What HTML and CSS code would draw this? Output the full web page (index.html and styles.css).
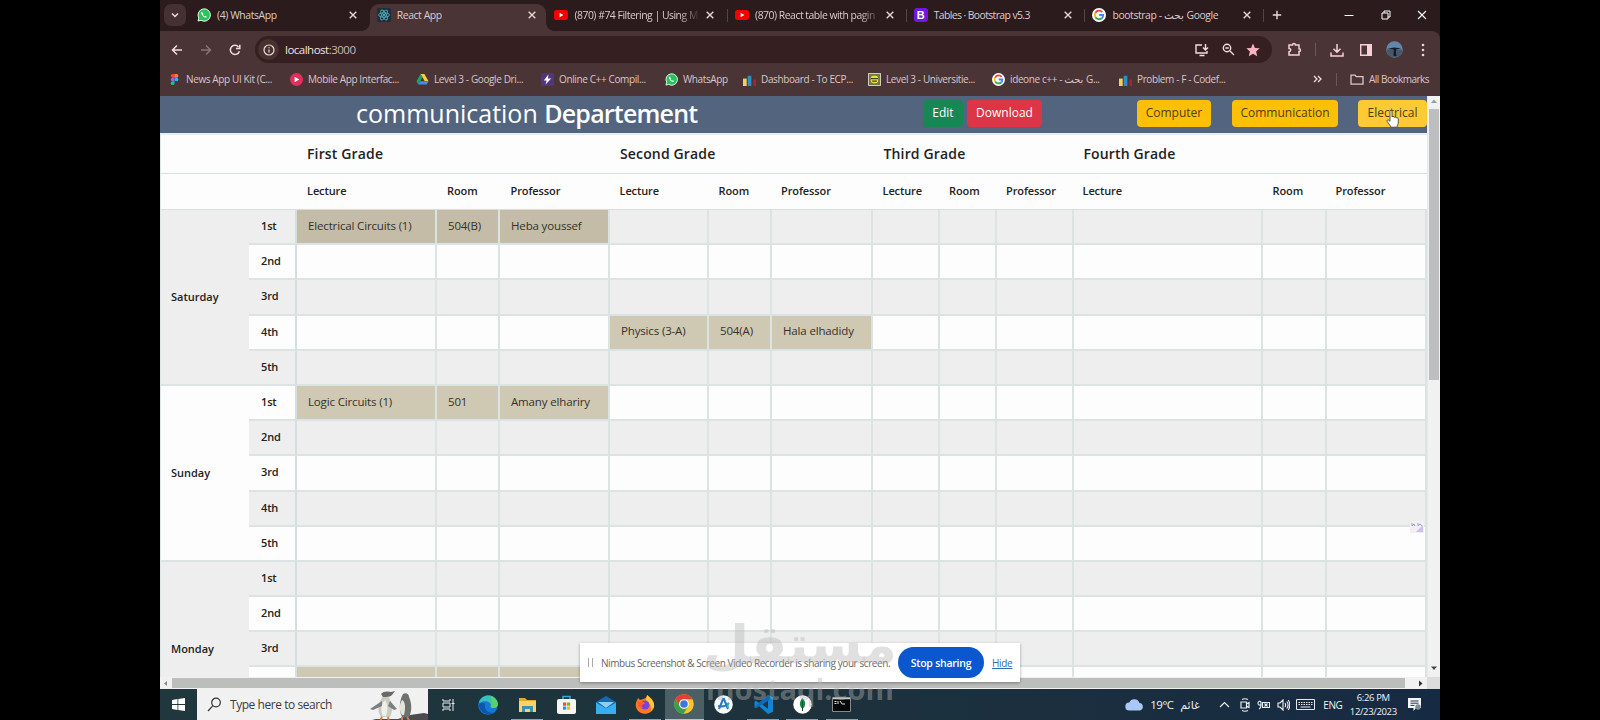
FILE: index.html
```html
<!DOCTYPE html>
<html lang="en">
<head>
<meta charset="utf-8">
<title>React App</title>
<link rel="stylesheet" href="styles.css">
</head>
<body>
<svg class="defs" width="0" height="0">
  <symbol id="x" viewBox="0 0 10 10"><path d="M1.700 1.700l6.600 6.600M8.300 1.700l-6.600 6.600" stroke="#e5d5d5" stroke-width="1.400" fill="none"/></symbol>
  <symbol id="wa" viewBox="0 0 14 14"><path d="M1 13l.8-3A6.2 6.2 0 1 1 4 12.300z" fill="#25c55b" stroke="#e9f8ee" stroke-width="1"/><path d="M4.800 3.800c-1 1-.6 2.500 1 4.200s3.300 2 4.200 1l-1.500-1.300-1 .6c-.8-.4-1.200-.9-1.500-1.600l.6-.9z" fill="#fff"/></symbol>
  <symbol id="yt" viewBox="0 0 14 14"><rect y="2" width="14" height="10" rx="2.500" fill="#f50000"/><path d="M5.600 4.800v4.400l3.800-2.200z" fill="#fff"/></symbol>
  <symbol id="gg" viewBox="0 0 14 14"><circle cx="7" cy="7" r="7" fill="#fff"/><g fill="none" stroke-width="1.900"><path d="M10.300 4.100A4.200 4.200 0 0 0 3.400 4.900" stroke="#ea4335"/><path d="M3.400 4.900a4.200 4.200 0 0 0 0 4.200" stroke="#fbbc05"/><path d="M3.400 9.100a4.200 4.200 0 0 0 6.400 1.100" stroke="#34a853"/><path d="M9.800 10.200A4.200 4.200 0 0 0 11.200 7H7.200" stroke="#4285f4"/></g></symbol>
  <symbol id="bars" viewBox="0 0 14 14"><path d="M0 6h4v8H0z" fill="#f3cf5f"/><path d="M5 3h4v11H5z" fill="#2c8fc9"/><path d="M11 7h3v7h-3z" fill="#a92331"/></symbol>
</svg>
<div class="screen">
  <div class="tabstrip">
    <div class="tabsearch"><svg width="10" height="10" viewBox="0 0 10 10"><path d="M2 3.500l3 3 3-3" stroke="#ecdcdc" stroke-width="1.500" fill="none"/></svg></div>
    <div class="tab"><svg class="ico"><use href="#wa"/></svg><span>(4) WhatsApp</span><svg class="close"><use href="#x"/></svg></div>
    <div class="tab active"><svg class="ico" viewBox="0 0 14 14"><rect width="14" height="14" rx="1.500" fill="#1d2f38"/><g fill="none" stroke="#4fa9b8" stroke-width=".9"><ellipse cx="7" cy="7" rx="5.500" ry="2.200"/><ellipse cx="7" cy="7" rx="5.500" ry="2.200" transform="rotate(60 7 7)"/><ellipse cx="7" cy="7" rx="5.500" ry="2.200" transform="rotate(120 7 7)"/></g><circle cx="7" cy="7" r="1.200" fill="#4fa9b8"/></svg><span>React App</span><svg class="close"><use href="#x"/></svg></div>
    <div class="tab"><svg class="ico"><use href="#yt"/></svg><span class="fade">(870) #74 Filtering | Using M</span><svg class="close"><use href="#x"/></svg></div>
    <div class="tab sep"><svg class="ico"><use href="#yt"/></svg><span class="fade">(870) React table with pagin</span><svg class="close"><use href="#x"/></svg></div>
    <div class="tab sep"><i class="ico boot">B</i><span class="tight">Tables · Bootstrap v5.3</span><svg class="close"><use href="#x"/></svg></div>
    <div class="tab sep"><svg class="ico"><use href="#gg"/></svg><span>bootstrap - بحث Google</span><svg class="close"><use href="#x"/></svg></div>
    <div class="newtab sep"><svg width="10" height="10" viewBox="0 0 10 10"><path d="M5 .8v8.400M.8 5h8.400" stroke="#eadada" stroke-width="1.400"/></svg></div>
    <div class="wincontrols">
      <svg width="10" height="10" viewBox="0 0 10 10"><path d="M.5 5.500h9" stroke="#fff"/></svg>
      <svg width="10" height="10" viewBox="0 0 10 10" fill="none" stroke="#fff"><path d="M1 3h6v6H1zM3 3V1h6v6H7"/></svg>
      <svg width="10" height="10" viewBox="0 0 10 10"><path d="M1 1l8 8M9 1l-8 8" stroke="#fff" stroke-width="1.100"/></svg>
    </div>
  </div>

  <div class="toolbar">
    <svg class="nav" viewBox="0 0 12 12"><path d="M11 6H1.500M6 1.500L1.500 6 6 10.500"/></svg>
    <svg class="nav dim" viewBox="0 0 12 12"><path d="M1 6h9.500M6 1.500L10.500 6 6 10.500"/></svg>
    <svg class="nav" viewBox="0 0 12 12"><path d="M10.400 7.200A4.600 4.600 0 1 1 9.500 2.900M10.800.8v3.700H7"/></svg>
    <div class="omnibox">
      <div class="info"><svg width="12" height="12" viewBox="0 0 12 12" fill="none" stroke="#efdcdc" stroke-width="1.200"><circle cx="6" cy="6" r="5"/><path d="M6 5.400v3.200M6 3.200v1.100"/></svg></div>
      <span class="url"><b>localhost</b>:3000</span>
      <svg class="o1" width="14" height="14" viewBox="0 0 14 14" fill="none" stroke="#f0dede" stroke-width="1.400"><path d="M7 2H1v8h11V8M4.500 12.500h5M10.500 1v5.500M8 4.500L10.500 7 13 4.500"/></svg>
      <svg class="o2" width="13" height="13" viewBox="0 0 13 13" fill="none" stroke="#f0dede" stroke-width="1.400"><circle cx="5" cy="5" r="3.700"/><path d="M3.300 5h3.400M8 8l4 4"/></svg>
      <svg class="o3" width="14" height="14" viewBox="0 0 14 14"><path d="M7 .5l1.900 4.400 4.800.4-3.600 3.200 1.100 4.700L7 10.700l-4.200 2.500 1.100-4.700L.3 5.300l4.800-.4z" fill="#ffb1c1"/></svg>
    </div>
    <svg class="puzzle" width="15" height="15" viewBox="0 0 15 15" fill="none" stroke="#f7cfd5" stroke-width="1.500"><path d="M2 3h3.500a1.400 1.400 0 0 1 2.900 0H12v3.700a1.400 1.400 0 0 1 0 2.900V13H2V9.800a1.600 1.600 0 0 0 0-3.400z"/></svg>
    <i class="vsep"></i>
    <svg class="dl" width="14" height="14" viewBox="0 0 14 14" fill="none" stroke="#f7cfd5" stroke-width="1.500"><path d="M7 1v8M3.500 5.700L7 9.200l3.500-3.500M1 9.500V13h12V9.500"/></svg>
    <svg class="panel" width="12" height="12" viewBox="0 0 12 12"><path d="M.7.7h10.600v10.600H.7z" fill="none" stroke="#f7cfd5" stroke-width="1.400"/><path d="M7 1h4.500v10H7z" fill="#f7cfd5"/></svg>
    <svg class="avatar" width="17" height="17" viewBox="0 0 17 17"><circle cx="8.500" cy="8.500" r="8.300" fill="#6287aa"/><path d="M.5 8.500h16a8 8 0 0 1-16 0z" fill="#46596c"/><path d="M1 8l7-1.500 7 .7-5 1.300v3.500l.5 3H7.500l.3-6.500z" fill="#151a24"/></svg>
    <svg class="dots" width="4" height="14" viewBox="0 0 4 14" fill="#f7cfd5"><circle cx="2" cy="2" r="1.300"/><circle cx="2" cy="7" r="1.300"/><circle cx="2" cy="12" r="1.300"/></svg>
  </div>

  <div class="bookmarks">
    <div class="bm w1"><svg class="ico" viewBox="0 0 14 14"><path d="M5 1h2v4H5a2 2 0 0 1 0-4z" fill="#f24e1e"/><path d="M7 1h2.200a2 2 0 0 1 0 4H7z" fill="#ff7262"/><path d="M5 5h2v4H5a2 2 0 0 1 0-4z" fill="#a259ff"/><circle cx="9.100" cy="7" r="2" fill="#1abcfe"/><path d="M5 9h2v2a2 2 0 1 1-2-2z" fill="#0acf83"/></svg><span>News App UI Kit (C...</span></div>
    <div class="bm w2"><svg class="ico" viewBox="0 0 14 14"><circle cx="7" cy="7" r="7" fill="#e0315c"/><path d="M5 4v6l5-3z" fill="#fff"/></svg><span>Mobile App Interfac...</span></div>
    <div class="bm w3"><svg class="ico" viewBox="0 0 14 14"><path d="M5 1h4l4.500 8h-4z" fill="#ffcf3f"/><path d="M5 1L.5 9l2 3.500L7 4.500z" fill="#11a861"/><path d="M4.500 9h9l-2 3.500h-9z" fill="#4688f4"/></svg><span>Level 3 - Google Dri...</span></div>
    <div class="bm w4"><svg class="ico" viewBox="0 0 14 14"><rect width="14" height="14" rx="2" fill="#51367f"/><path d="M8 1.500L3 8h3l-1 4.500L11 6H7.500z" fill="#fff"/></svg><span>Online C++ Compil...</span></div>
    <div class="bm w5"><svg class="ico"><use href="#wa"/></svg><span>WhatsApp</span></div>
    <div class="bm w6"><svg class="ico"><use href="#bars"/></svg><span>Dashboard - To ECP...</span></div>
    <div class="bm w7"><svg class="ico" viewBox="0 0 14 14"><path d="M.5.5h13v13H.5z" fill="#6f7a4c" stroke="#dcdcc8"/><rect x="3" y="3" width="8" height="8" rx="3" fill="#f0e130"/><path d="M3 6h8M4.500 8.800h5" stroke="#3b4214" stroke-width="1.300"/></svg><span>Level 3 - Universitie...</span></div>
    <div class="bm w8"><svg class="ico"><use href="#gg"/></svg><span>ideone c++ - بحث G...</span></div>
    <div class="bm w9"><svg class="ico"><use href="#bars"/></svg><span>Problem - F - Codef...</span></div>
    <div class="bmright">
      <svg width="9" height="8" viewBox="0 0 9 8" fill="none" stroke="#efdcdc" stroke-width="1.300"><path d="M1 1l3 3-3 3M5 1l3 3-3 3"/></svg>
      <i class="vsep"></i>
      <svg width="14" height="11" viewBox="0 0 14 11" fill="none" stroke="#dcc6c8" stroke-width="1.300"><path d="M1 1.200h4l1.400 1.500H13v7.500H1z"/></svg>
      <span>All Bookmarks</span>
    </div>
  </div>

  <div class="viewport">
    <div class="page">
      <header class="pagehead">
        <h1>communication <b>Departement</b></h1>
        <button class="btn edit">Edit</button>
        <button class="btn download">Download</button>
        <button class="btn dept computer">Computer</button>
        <button class="btn dept communication">Communication</button>
        <button class="btn dept electrical">Electrical</button>
      </header>
      <div class="schedule">
        <div class="grades"><span>First Grade</span><span>Second Grade</span><span>Third Grade</span><span>Fourth Grade</span></div>
        <div class="heads" id="heads"></div>
        <div class="grid" id="grid"></div>
      </div>
      <svg class="widget" width="14" height="14" viewBox="0 0 14 14"><path d="M0 1h14v12H0z" fill="#f1eef6"/><path d="M6 12l7-7v7z" fill="#cdbdec"/><path d="M2 3v3l2-2 1 2M8 3v3l2-2 2 2" fill="none" stroke="#a5a2af"/></svg>
    </div>
    <div class="vscroll"><svg width="12" height="12" viewBox="0 0 12 12"><path d="M3 8l3-3.500L9 8z" fill="#9a9aa8"/></svg><i></i><svg width="12" height="12" viewBox="0 0 12 12"><path d="M3 4.500h6L6 8z" fill="#444"/></svg></div>
    <div class="hscroll"><svg width="12" height="11" viewBox="0 0 12 11"><path d="M7 3L4 5.500 7 8z" fill="#888"/></svg><i></i><svg width="19" height="11" viewBox="0 0 19 11"><path d="M14 2.500l3.500 3-3.500 3z" fill="#333"/></svg></div>
  </div>

  <div class="taskbar">
    <div class="start"><svg width="13" height="13" viewBox="0 0 13 13" fill="#fff"><path d="M0 1.900l5.500-.8v5H0zM6.300 1L13 0v6.100H6.300zM0 6.900h5.500v5L0 11.100zM6.300 6.900H13V13l-6.700-1z"/></svg></div>
    <div class="search">
      <svg width="15" height="15" viewBox="0 0 15 15" fill="none" stroke="#333" stroke-width="1.200"><circle cx="9" cy="5.500" r="4.300"/><path d="M6 8.700L1 14"/></svg>
      <span>Type here to search</span>
      <svg class="penguins" width="60" height="30" viewBox="0 0 60 30"><path d="M0 30l8-2 22 0 12-4 14-2 4 1v7z" fill="#4b4b50"/><path d="M16 2c3-2 6 0 6 3l-1 2c4 5 4 13 1 19h-9c-4-6-3-14 1-19z" fill="#c9cbc0"/><path d="M17 9c3 4 3 11 1 16h-3c-3-5-2-12 2-16z" fill="#efefe6"/><path d="M14 10L2 18l3 1 9-4M22 10l7 8-3 1-6-4" fill="#79807f"/><path d="M13 3c2-3 7-3 10-2l4-1-3 4c-2 2-7 2-9 2z" fill="#666b69"/><path d="M35 3c3-2 6 0 6 3 3 7 3 14 0 20h-7c-3-6-3-16 1-23z" fill="#6d726e"/><path d="M34 9c3 1 4 7 2 15h-2c-3-5-3-10 0-15z" fill="#e6e5d9"/><path d="M14 26l-2 4M20 26l1 4M34 26v3M39 26l2 3" stroke="#e07838" stroke-width="2"/></svg>
    </div>
    <div class="apps">
      <div><svg width="14" height="14" viewBox="0 0 14 14" fill="none" stroke="#e8edef"><path d="M1 1v2h7V1M1 13v-2h7v2M1 5h7v4H1zM11 1v12M9.500 5.500h3"/></svg></div>
      <div><svg width="20" height="20" viewBox="0 0 20 20"><circle cx="10" cy="10" r="9.800" fill="#1479d0"/><path d="M1 8C3-2 18-2 19.800 8c.6 5-5 6-7.300 4 2-5-5-8-11.500-4z" fill="#37c2b5"/><path d="M13 1c5 2 7 6 6.800 8.500-.4 4-5 4-7.300 2.500 2-4 1-7 .5-11z" fill="#5cd06a"/><path d="M7 10c-1 5 4 9 9 7.500C9 22 1 17 1 10c2-3 6-3 6 0z" fill="#0d55ad"/></svg></div>
      <div class="run"><svg width="19" height="17" viewBox="0 0 19 17"><path d="M1 2h6l2 2h9v12H1z" fill="#e6a92e"/><path d="M1 5h17v11H1z" fill="#fcd462"/><path d="M4 16v-6h11v6h-3v-3H7v3z" fill="#3e8fbd"/></svg></div>
      <div><svg width="19" height="20" viewBox="0 0 19 20"><path d="M6 5V1.500h7V5" fill="none" stroke="#39a5dc" stroke-width="1.500"/><rect y="4" width="19" height="15" rx="2" fill="#f5f5f5"/><path d="M6 7.500h3.200v3.200H6z" fill="#f25022"/><path d="M10 7.500h3.200v3.200H10z" fill="#7fba00"/><path d="M6 11.500h3.200v3.200H6z" fill="#00a4ef"/><path d="M10 11.500h3.200v3.200H10z" fill="#ffb900"/></svg></div>
      <div><svg width="20" height="18" viewBox="0 0 20 18"><path d="M0 6l10-6 10 6v12H0z" fill="#1269b8"/><path d="M2 6h16L10 12z" fill="#8fcdf3"/><path d="M0 6.500l10 6 10-6V18H0z" fill="#36aef0"/></svg></div>
      <div class="run"><svg width="20" height="19" viewBox="0 0 20 19"><path d="M3 3l2 2c4-1 7-2 7-5 4 3 8 7 7 12-2 9-16 9-18 0C0 8 2 6 3 3z" fill="#ff7925"/><path d="M12 0c4 3 8 7 7 12l-3 4c1-6-2-8-5-10z" fill="#ffc83b"/><circle cx="10" cy="10" r="4.500" fill="#7b45cf"/><path d="M3 7c4-1 7 0 7 2-3 0-4 2-2 4-4 0-6-3-5-6z" fill="#ff5b2d"/></svg></div>
      <div class="run front"><svg width="20" height="20" viewBox="0 0 20 20"><circle cx="10" cy="10" r="9.800" fill="#f7c52c"/><path d="M1.500 5.100A9.800 9.800 0 0 1 18.500 5.200H10A4.900 4.900 0 0 0 5.700 12.400z" fill="#e34033"/><path d="M1.500 5.100A9.800 9.800 0 0 0 9.500 19.800L14.200 12.400A4.900 4.900 0 0 1 5.700 12.400z" fill="#31a350"/><circle cx="10" cy="10" r="4.800" fill="#fff"/><circle cx="10" cy="10" r="3.800" fill="#3978e5"/></svg></div>
      <div><svg width="19" height="19" viewBox="0 0 19 19"><circle cx="9.500" cy="9.500" r="9.300" fill="#f4fafb"/><path d="M9.500 3L5 14M9.500 3L14 14M4 11c4 1 8 0 11-3" fill="none" stroke="#2979c2" stroke-width="2"/><path d="M14 8v5" stroke="#3bbf7a" stroke-width="1.500"/></svg></div>
      <div class="run"><svg width="19" height="19" viewBox="0 0 19 19"><path d="M14 0l5 2.300v14.400L14 19 5 10.900 2 13.200.5 12.300v-5.500L2 5.800l3 2.300z" fill="#1583cf"/><path d="M14 5.200v8.600L8.300 9.500z" fill="#1f3542"/><path d="M.5 12.300L14 0l1.500.7V5L2 13.200z" fill="#0d6cb3"/></svg></div>
      <div class="run"><svg width="19" height="19" viewBox="0 0 19 19"><circle cx="9.500" cy="9.500" r="9.200" fill="#fff"/><path d="M9.500 3c4 4 3 9 0 11-3-2-4-7 0-11z" fill="#13884c"/><path d="M9.500 6v10" stroke="#0a5631"/></svg></div>
      <div class="run"><svg width="19" height="15" viewBox="0 0 19 15"><path d="M.5.500h18v14H.5z" fill="#080808" stroke="#858b8d"/><path d="M1 1.500h17" stroke="#c8c8c8" stroke-width="1.500"/><path d="M2.500 4.500h2M2.500 6.500h2M6 4v3M8 4l2 3h3" stroke="#ddd" fill="none"/></svg></div>
    </div>
    <div class="tray">
      <svg class="cloud" width="19" height="13" viewBox="0 0 19 13"><path d="M4.500 12.500a4 4 0 0 1-.3-8A5.500 5.500 0 0 1 14.500 5a3.800 3.800 0 0 1 .3 7.500z" fill="#a9c8f5"/></svg>
      <span class="temp">19°C</span><span class="cond">غائم</span>
      <svg class="t1" width="11" height="7" viewBox="0 0 11 7"><path d="M1 6l4.500-4.500L10 6" fill="none" stroke="#f0f3f6" stroke-width="1.200"/></svg>
      <svg class="t2" width="10" height="14" viewBox="0 0 10 14" fill="none" stroke="#e8edf2" stroke-width="1.200"><path d="M2 1.500c2-1 4-1 6 0M2 12.500c2 1 4 1 6 0M1 4h5.500v6H1zM6.500 6L9 4.500v5L6.500 8"/></svg>
      <svg class="t3" width="13" height="10" viewBox="0 0 13 10" fill="none" stroke="#e8edf2" stroke-width="1.100"><path d="M4 4.500C2 6 1 4.500 1 3s3-3 3 0v2.500C4 7 3 8.500 2 9M5.500 2.500h7v5h-7zM7.500 3.500l3 3M10.500 3.500l-3 3"/></svg>
      <svg class="t4" width="13" height="12" viewBox="0 0 13 12" fill="none" stroke="#f0f3f6" stroke-width="1.100"><path d="M1 4h2l3-3v10L3 8H1zM8 4c.8 1.200.8 2.800 0 4M9.800 2.500c1.500 2 1.500 5 0 7M11.300 1c1.800 3 1.800 7 0 10"/></svg>
      <svg class="t5" width="19" height="11" viewBox="0 0 19 11" fill="none" stroke="#e3e9ee"><path d="M.5.500h18v10H.5z"/><path d="M2.500 3.500h14M2.500 5.500h14" stroke-dasharray="1.500 1"/><path d="M4.500 8h10"/></svg>
      <span class="eng">ENG</span>
      <div class="clock"><span>6:26 PM</span><span>12/23/2023</span></div>
      <svg class="note" width="13" height="13" viewBox="0 0 13 13"><path d="M0 0h13v10H8l-2.500 3v-3H0z" fill="#f5f6f7"/><path d="M2.500 3h8M2.500 5.200h8M2.500 7.400h4" stroke="#26374a"/><circle cx="10" cy="9" r="2.700" fill="#7f8c98"/></svg>
    </div>
  </div>

  <div class="sharebar">
    <i class="grip"></i><span>Nimbus Screenshot &amp; Screen Video Recorder is sharing your screen.</span>
    <button>Stop sharing</button><a>Hide</a>
  </div>
  <div class="mark"><div class="mark-ar" lang="ar">مستقل</div><div class="mark-en">mostaql.com</div></div>
  <svg class="cursor" width="14" height="18" viewBox="0 0 14 18"><path d="M4 1.500c0-1.300 2-1.300 2 0V7c.6-.8 2-.6 2.200.3.700-.6 1.900-.3 2 .6.900-.5 2.100 0 2.100 1.100v4.200l-1.500 4H5.200L1.200 11.500c-.8-1 .4-2.200 1.500-1.300L4 11.300z" fill="#fff" stroke="#333" stroke-width=".8"/></svg>
</div>
<script src="schedule.js"></script>
</body>
</html>
```
FILE: styles.css
```css
* { box-sizing: border-box; }
body { margin: 0; background: #000; font-family: "Open Sans", "DejaVu Sans", sans-serif; overflow: hidden; }
svg { display: block; flex: none; }
.defs { position: absolute; }
.screen { position: relative; width: 1280px; height: 720px; margin: 0 auto; overflow: hidden; display: flex; flex-direction: column; background: #2c1b1c; }
.ico { width: 14px; height: 14px; flex: none; }

.tabstrip { height: 31px; flex: none; background: #2c1b1c; display: flex; color: #dccbcb; font-size: 10.400px; }
.tabsearch { width: 22px; height: 22px; margin: 4px 5px 0 4px; border-radius: 7px; background: #453033; display: flex; align-items: center; justify-content: center; }
.tab { width: 178.7px; height: 31px; display: flex; align-items: center; padding: 0 12px 1px 6px; position: relative; }
.tab span { flex: 1; margin: 0 0 0 6px; white-space: nowrap; letter-spacing: -.4px; }
.tab .fade { letter-spacing: -.48px; -webkit-mask-image: linear-gradient(90deg, #000 105px, transparent 127px); }
.tab .tight { letter-spacing: -.6px; }
.tab.sep { padding-left: 8px; padding-right: 11px; }
.close { width: 10px; height: 10px; }
.active { background: #4b3436; border-radius: 9px 9px 0 0; margin-top: 4px; height: 27px; padding: 0 9px 5px 7px; width: 176px; margin-right: 2.700px; }
.active::before, .active::after { content: ""; position: absolute; bottom: 0; width: 8px; height: 8px; }
.active::before { left: -8px; background: radial-gradient(circle at 0 0, transparent 7.500px, #4b3436 8px); }
.active::after { right: -8px; background: radial-gradient(circle at 100% 0, transparent 7.500px, #4b3436 8px); }
.sep { background: linear-gradient(#5a4143, #5a4143) 0 9px / 1px 13px no-repeat; }
.boot { background: #7118e0; border-radius: 3px; color: #fff; font: bold 11px/14px "Liberation Sans", sans-serif; text-align: center; }
.newtab { width: 24px; padding: 10px 0 0 9px; }
.wincontrols { display: flex; gap: 26.500px; padding: 10px 0 0 57px; }

.toolbar { height: 33px; flex: none; background: #4b3436; display: flex; align-items: center; padding: 4px 0 0 11px; border-radius: 0 8px 0 0; }
.nav { width: 12px; height: 12px; fill: none; stroke: #f0dcdd; stroke-width: 1.500; margin-right: 17px; }
.nav.dim { stroke: #8b7274; }
.nav:nth-child(3) { margin-right: 14px; }
.omnibox { width: 1017px; height: 27px; border-radius: 14px; background: #351f21; display: flex; align-items: center; padding-left: 3px; }
.info { width: 21px; height: 21px; border-radius: 50%; background: #49312f; display: flex; align-items: center; justify-content: center; }
.url { width: 904px; margin: -1px 0 0 6px; font-size: 11.500px; letter-spacing: -.5px; color: #cbb8b9; }
.url b { font-weight: 400; color: #f0e3e3; }
.o1 { margin-left: 6px; }
.o2 { margin-left: 13px; }
.o3 { margin-left: 11px; }
.puzzle { margin-left: 15px; }
.vsep { width: 1px; height: 13px; background: #715557; }
.toolbar .vsep { margin-left: 13px; }
.dl { margin-left: 14px; }
.panel { margin-left: 16px; }
.avatar { margin-left: 14px; }
.dots { margin-left: 18px; }

.bookmarks { height: 32px; flex: none; background: #4b3436; display: flex; align-items: center; padding: 0 0 2px 8px; color: #d9c6c7; font-size: 10px; letter-spacing: -.38px; white-space: nowrap; }
.bm { display: flex; align-items: center; gap: 5px; }
.bm .ico { width: 13px; height: 13px; }
.w1 { width: 122px; } .w2 { width: 126px; } .w3 { width: 125px; } .w4 { width: 124px; } .w5 { width: 78px; } .w6 { width: 125px; } .w7 { width: 124px; } .w8 { width: 127px; } .w9 { width: 194px; }
.bmright { display: flex; align-items: center; }
.bmright .vsep { margin: 0 13px 0 14px; }
.bmright span { margin-left: 5px; letter-spacing: -.5px; }

.viewport { height: 593px; flex: none; display: grid; grid-template: 581px 12px / 1267px 13px; background: #f0f0f0; }
.page { overflow: hidden; position: relative; background: #fdfdfd; }
.pagehead { height: 37px; background: #53647f; display: flex; align-items: center; padding: 0 0 2px 196px; color: #fff; }
.pagehead h1 { width: 571px; margin: -2px 0 0; font-weight: 400; font-size: 25px; line-height: 30px; white-space: nowrap; }
.pagehead h1 b { font-weight: 600; letter-spacing: -.8px; }
.btn { height: 27px; border: 0; border-radius: 4px; padding: 0 0 2px; font: 500 12px "Open Sans", sans-serif; flex: none; }
.edit { width: 40px; background: #198754; color: #fff; }
.download { width: 75px; margin-left: 4px; background: #dc3545; color: #fff; }
.dept { background: #fdc007; color: #4d3e15; }
.computer { width: 74px; margin-left: 95px; }
.communication { width: 106px; margin-left: 21px; }
.electrical { width: 69px; margin-left: 20px; background: #fbca34; }

.schedule { border-top: 2px solid #e0eff8; border-left: 1px solid #dde7ea; color: #222; }
.grades, .heads { display: grid; align-items: center; padding: 0 0 2px 146px; border-bottom: 1px solid #d5dfdd; font-weight: 600; }
.grades { height: 39px; grid-template-columns: 313px 263.500px 200px 1fr; font-size: 14px; letter-spacing: .15px; }
.heads { height: 36px; grid-template-columns: 140px 63.500px 109px 99px 62.500px 101.500px 66.500px 57px 76.500px 190px 63px 1fr; font-size: 11px; letter-spacing: -.1px; }
.grid { display: grid; grid-template-columns: 88px 48px 140px 63px 110px 99px 63px 101px 67px 56.500px 77.500px 189px 64px 100px; grid-auto-rows: 35.200px; }
.day, .period, .cell { border-bottom: 2px solid #dbe3e3; display: flex; align-items: center; white-space: nowrap; }
.day { grid-row: span 5; padding-left: 10px; font-weight: 600; font-size: 11px; }
.period { padding: 0 0 2px 12px; font-weight: 600; font-size: 11px; letter-spacing: -.15px; border-right: 2px solid #d5dfdf; }
.cell { border-right: 2px solid #dbe3e3; padding: 0 0 3px 11px; font-size: 11.500px; letter-spacing: -.15px; }
.odd { background: #eee; }
.even { background: #fdfdfd; }
.taken { background: #cfc8b2; color: #36322b; }
.taken.odd { background: #c4bca7; }
.widget { position: absolute; right: 3px; top: 424px; }
.vscroll { background: #f1f1f2; display: flex; flex-direction: column; border-left: 1px solid #e5e9e9; }
.vscroll i { height: 271px; flex: none; width: 10px; margin: 2px 0 283px 1px; background: #bdbebf; }
.vscroll svg { height: 12px; margin-top: -1px; }
.hscroll { grid-column: 1 / 3; background: linear-gradient(90deg, #f1f1f1 1267px, #dcdcdc 0); display: flex; align-items: center; }
.hscroll i { width: 1233px; height: 10px; background: #bcbebc; }

.taskbar { height: 31px; flex: none; display: flex; background: linear-gradient(90deg, #20373d, #1d323c 50%, #172a43); color: #eef2f4; }
.start { width: 37px; padding: 9px 0 0 12px; }
.search { width: 231px; background: #f1f1f1; display: flex; align-items: center; color: #3c3c3c; font-size: 12px; overflow: hidden; }
.search svg:first-child { margin: 0 8px 0 10px; }
.search span { width: 141px; white-space: nowrap; letter-spacing: -.45px; }
.penguins { margin-top: 2px; }
.apps { display: flex; padding-left: 1px; }
.apps > div { width: 39.300px; display: flex; align-items: center; justify-content: center; }
.run { background: linear-gradient(#7aa7c4, #7aa7c4) 50% 100% / 32px 1.500px no-repeat; }
.apps > .front { background: #4c5f65; border-bottom: 1px solid #a6c8dc; }
.tray { display: flex; align-items: center; margin-left: 264px; font-size: 11.500px; white-space: nowrap; }
.temp { margin-left: 6px; width: 30px; letter-spacing: -.5px; }
.cond { width: 32px; font-size: 11px; }
.t1 { margin-left: 7px; } .t2 { margin-left: 10px; } .t3 { margin-left: 7px; } .t4 { margin-left: 7px; } .t5 { margin-left: 6px; }
.eng { margin-left: 8px; font-size: 10px; letter-spacing: -.4px; width: 20px; }
.clock { width: 60px; display: flex; flex-direction: column; text-align: center; font-size: 9.500px; line-height: 14px; letter-spacing: -.35px; }
.note { margin-left: 5px; }

.sharebar { position: absolute; left: 420px; top: 643px; width: 440px; height: 39px; background: #fff; box-shadow: 0 1px 3px rgba(0, 0, 0, .35); display: flex; align-items: center; font-size: 10px; color: #666; white-space: nowrap; }
.grip { width: 5px; height: 9px; margin-left: 8px; border: solid #aaa; border-width: 0 1px; }
.sharebar span { width: 289px; margin-left: 8px; letter-spacing: -.42px; }
.sharebar button { width: 86px; height: 31px; margin-left: 8px; padding: 0; border: 0; border-radius: 16px; background: #0b57d0; color: #fff; font: 600 10.500px "Open Sans", sans-serif; letter-spacing: -.25px; }
.sharebar a { margin-left: 8px; color: #2f6bb8; text-decoration: underline; letter-spacing: -.3px; }
.mark { position: absolute; left: 540px; top: 608px; width: 200px; color: rgba(180, 180, 180, .42); text-align: center; font-weight: 700; }
.mark-ar { font: 700 53px/74px "DejaVu Sans", sans-serif; height: 64px; }
.mark-en { font: 700 29px/34px "Open Sans", sans-serif; }
.cursor { position: absolute; left: 1226px; top: 110px; }
```
FILE: schedule.js
```js
const columns = ["Lecture", "Room", "Professor"];
const taken = {
  "0-0": [0, ["Electrical Circuits (1)", "504(B)", "Heba youssef"]],
  "0-3": [1, ["Physics (3-A)", "504(A)", "Hala elhadidy"]],
  "1-0": [0, ["Logic Circuits (1)", "501", "Amany elhariry"]],
  "2-3": [0, ["", "", ""]]
};
const add = (parent, cls, text) => {
  const el = document.createElement("div");
  el.className = cls;
  el.textContent = text;
  parent.append(el);
};
const heads = document.getElementById("heads");
for (let grade = 0; grade < 4; grade++) columns.forEach(name => add(heads, "head", name));
const grid = document.getElementById("grid");
["Saturday", "Sunday", "Monday"].forEach((day, d) => {
  add(grid, "day " + (d % 2 ? "even" : "odd"), day);
  ["1st", "2nd", "3rd", "4th", "5th"].forEach((period, p) => {
    // the page is cut off just after the fourth Monday row begins
    if (d === 2 && p > 2) period = "";
    const shade = (d * 5 + p) % 2 ? "even" : "odd";
    add(grid, "period " + shade, period);
    const slot = taken[d + "-" + p];
    for (let c = 0; c < 12; c++) {
      const full = slot && slot[0] === Math.floor(c / 3);
      add(grid, "cell " + shade + (full ? " taken" : ""), full ? slot[1][c % 3] : "");
    }
  });
});
```
